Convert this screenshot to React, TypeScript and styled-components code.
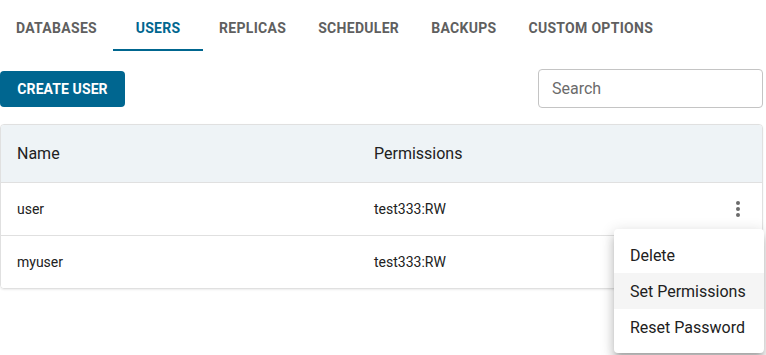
import React from "react";
import styled, { createGlobalStyle } from "styled-components";

const Global = createGlobalStyle`
  html, body { margin: 0; padding: 0; background: #fff; }
  body { font-family: Roboto, "Liberation Sans", Arial, sans-serif; color: #212121; }
`;

const Page = styled.div`
  width: 766px;
  height: 355px;
  position: relative;
  overflow: hidden;
`;

const TabBar = styled.div`
  display: flex;
  height: 51px;
`;

const Tab = styled.div<{ $active?: boolean }>`
  position: relative;
  min-width: 90px;
  padding: 4px 16px 0;
  box-sizing: border-box;
  display: flex;
  align-items: center;
  justify-content: center;
  font-size: 14px;
  font-weight: 700;
  letter-spacing: 0.3px;
  text-transform: uppercase;
  color: ${(p) => (p.$active ? "#00668f" : "#5f5f5f")};
  &::after {
    content: "";
    display: ${(p) => (p.$active ? "block" : "none")};
    position: absolute;
    left: 0;
    right: 0;
    bottom: 0;
    height: 2px;
    background: #00668f;
  }
`;

const Toolbar = styled.div`
  display: flex;
  align-items: center;
  justify-content: space-between;
  padding: 17px 3px 0 0;
  height: 40px;
`;

const PrimaryButton = styled.button`
  height: 36px;
  width: 125px;
  border: none;
  border-radius: 4px;
  background: #006690;
  color: #fff;
  font-family: inherit;
  font-size: 14px;
  font-weight: 700;
  letter-spacing: 0.1px;
  text-transform: uppercase;
  padding: 0;
  margin-top: 1px;
`;

const SearchInput = styled.input`
  width: 225px;
  height: 39px;
  box-sizing: border-box;
  border: 1px solid #c4c4c4;
  border-radius: 4px;
  padding: 0 13px;
  font-family: inherit;
  font-size: 16px;
  color: #212121;
  outline: none;
  &::placeholder { color: #6b6b6b; }
`;

const Table = styled.div`
  margin: 16px 3px 0 0;
  border: 1px solid #e0e0e0;
  border-radius: 4px;
  overflow: hidden;
  box-shadow: 0 1px 2px rgba(0, 0, 0, 0.08);
`;

const Row = styled.div<{ $header?: boolean }>`
  display: grid;
  grid-template-columns: 357px 1fr 50px;
  align-items: center;
  height: ${(p) => (p.$header ? "57px" : "52px")};
  padding-left: 16px;
  background: ${(p) => (p.$header ? "#eef3f6" : "#fff")};
  font-size: ${(p) => (p.$header ? "16px" : "14px")};
  color: #212121;
  & + & { border-top: 1px solid #e0e0e0; }
`;

const Kebab = styled.div`
  display: flex;
  justify-content: center;
  color: #6b6b6b;
  padding-left: 2px;
`;

const Menu = styled.div`
  position: absolute;
  left: 614px;
  top: 229px;
  width: 150px;
  padding: 8px 0;
  background: #fff;
  border-radius: 4px;
  box-shadow: 0 5px 5px -3px rgba(0,0,0,0.2), 0 8px 10px 1px rgba(0,0,0,0.14), 0 3px 14px 2px rgba(0,0,0,0.12);
`;

const MenuItem = styled.div<{ $hover?: boolean }>`
  height: 36px;
  display: flex;
  align-items: center;
  padding: 0 16px;
  font-size: 16px;
  color: #212121;
  background: ${(p) => (p.$hover ? "#f5f5f5" : "transparent")};
`;

const DotsIcon = () => (
  <svg width="24" height="24" viewBox="0 0 24 24" fill="currentColor">
    <circle cx="12" cy="6" r="2" />
    <circle cx="12" cy="12" r="2" />
    <circle cx="12" cy="18" r="2" />
  </svg>
);

const tabs = ["Databases", "Users", "Replicas", "Scheduler", "Backups", "Custom Options"];
const users = [
  { name: "user", perm: "test333:RW", menu: true },
  { name: "myuser", perm: "test333:RW", menu: false },
];

export default function App() {
  return (
    <Page>
      <Global />
      <TabBar>
        {tabs.map((t) => (
          <Tab key={t} $active={t === "Users"}>{t}</Tab>
        ))}
      </TabBar>
      <Toolbar>
        <PrimaryButton>Create User</PrimaryButton>
        <SearchInput placeholder="Search" />
      </Toolbar>
      <Table>
        <Row $header>
          <div>Name</div>
          <div>Permissions</div>
          <div />
        </Row>
        {users.map((u) => (
          <Row key={u.name}>
            <div>{u.name}</div>
            <div>{u.perm}</div>
            <Kebab>{u.menu ? <DotsIcon /> : null}</Kebab>
          </Row>
        ))}
      </Table>
      <Menu>
        <MenuItem>Delete</MenuItem>
        <MenuItem $hover>Set Permissions</MenuItem>
        <MenuItem>Reset Password</MenuItem>
      </Menu>
    </Page>
  );
}
